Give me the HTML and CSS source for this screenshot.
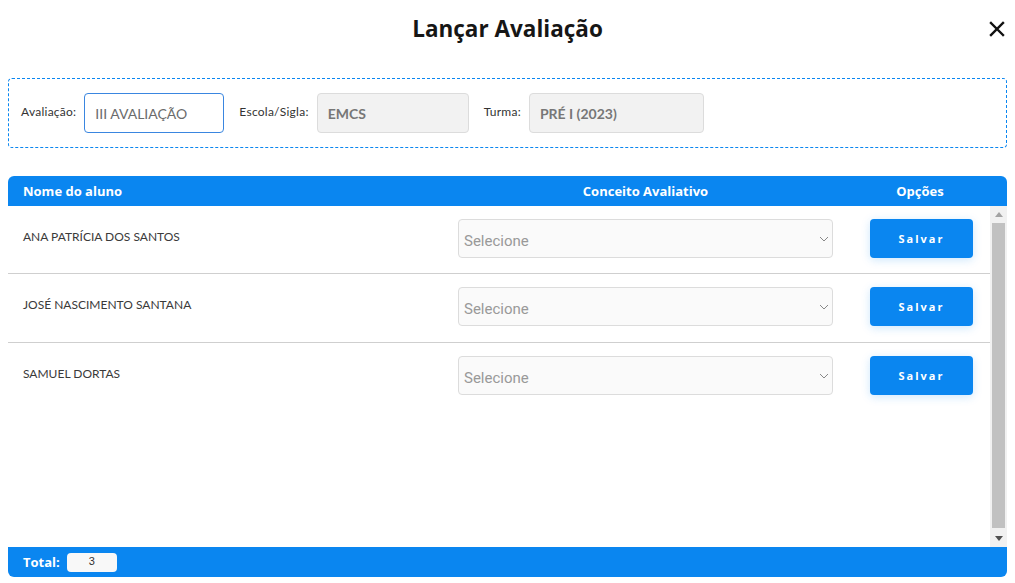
FILE: index.html
```
<!DOCTYPE html>
<html lang="pt-BR">
<head>
    <meta charset="UTF-8">
    <meta name="viewport" content="width=device-width, initial-scale=1.0">
    <title>Lançar Avaliação</title>
    <link rel="stylesheet" href="styles.css">
</head>
<body>
    <div class="modal">
        <div class="modal-head">
            <h1 class="modal-title">Lançar Avaliação</h1>
            <button class="close-btn" aria-label="Fechar">
                <svg width="16" height="16" viewBox="0 0 16 16">
                    <path d="M2 2 L14 14 M14 2 L2 14" stroke="#111" stroke-width="2.4" stroke-linecap="square" fill="none"/>
                </svg>
            </button>
        </div>

        <div class="filters">
            <label class="field-label">Avaliação:</label>
            <input class="field field-active w-aval" type="text" value="III AVALIAÇÃO">
            <label class="field-label">Escola/Sigla:</label>
            <input class="field field-disabled w-escola" type="text" value="EMCS" disabled>
            <label class="field-label">Turma:</label>
            <input class="field field-disabled w-turma" type="text" value="PRÉ I (2023)" disabled>
        </div>

        <div class="table">
            <div class="thead">
                <div class="th th-name">Nome do aluno</div>
                <div class="th">Conceito Avaliativo</div>
                <div class="th">Opções</div>
            </div>
            <div class="tbody">
                <div class="rows">
                    <div class="row">
                        <div class="td-name">ANA PATRÍCIA DOS SANTOS</div>
                        <div class="select-wrap">
                            <select class="select"><option>Selecione</option></select>
                            <svg class="chevron" width="10" height="6" viewBox="0 0 10 6"><path d="M1 1 L5 5 L9 1" stroke="#888" stroke-width="1" fill="none"/></svg>
                        </div>
                        <div class="td-opt"><button class="btn-save">Salvar</button></div>
                    </div>
                    <div class="row">
                        <div class="td-name">JOSÉ NASCIMENTO SANTANA</div>
                        <div class="select-wrap">
                            <select class="select"><option>Selecione</option></select>
                            <svg class="chevron" width="10" height="6" viewBox="0 0 10 6"><path d="M1 1 L5 5 L9 1" stroke="#888" stroke-width="1" fill="none"/></svg>
                        </div>
                        <div class="td-opt"><button class="btn-save">Salvar</button></div>
                    </div>
                    <div class="row row-last">
                        <div class="td-name">SAMUEL DORTAS</div>
                        <div class="select-wrap">
                            <select class="select"><option>Selecione</option></select>
                            <svg class="chevron" width="10" height="6" viewBox="0 0 10 6"><path d="M1 1 L5 5 L9 1" stroke="#888" stroke-width="1" fill="none"/></svg>
                        </div>
                        <div class="td-opt"><button class="btn-save">Salvar</button></div>
                    </div>
                </div>
                <!-- barra de rolagem -->
                <div class="scrollbar">
                    <div class="scroll-btn">
                        <svg width="8" height="5" viewBox="0 0 8 5"><path d="M0 5 L4 0 L8 5 Z" fill="#a3a3a3"/></svg>
                    </div>
                    <div class="scroll-thumb"></div>
                    <div class="scroll-btn">
                        <svg width="8" height="5" viewBox="0 0 8 5"><path d="M0 0 L8 0 L4 5 Z" fill="#505050"/></svg>
                    </div>
                </div>
            </div>
            <div class="tfoot">
                <span class="total-label">Total:</span>
                <span class="total-box">3</span>
            </div>
        </div>
    </div>
</body>
</html>
```

FILE: styles.css
```
body {
    margin: 0;
    background-color: #fff;
    font-family: Lato, "Open Sans", sans-serif;
    color: #333;
}

.modal {
    padding: 0 8px;
}

.modal-head {
    height: 56px;
    display: flex;
    align-items: center;
    justify-content: center;
    position: relative;
    margin-bottom: 22px;
}

.modal-title {
    margin: 0;
    font-family: "Open Sans", sans-serif;
    font-size: 22.5px;
    font-weight: 700;
    color: #161616;
}

.close-btn {
    position: absolute;
    right: 2px;
    top: 21px;
    border: none;
    background: none;
    padding: 0;
    cursor: pointer;
    line-height: 0;
}

.filters {
    border: 1px dashed #0a86f0;
    border-radius: 4px;
    padding: 14px 12px;
    display: flex;
    align-items: center;
}

.field-label {
    font-size: 12px;
    letter-spacing: 0.25px;
    color: #333;
    margin-right: 8px;
    margin-top: -4px;
}

.field {
    box-sizing: border-box;
    height: 40px;
    border-radius: 4px;
    padding: 0 10px;
    font-family: Lato, sans-serif;
    font-size: 14px;
    color: #6b6b6b;
    margin-right: 15px;
    outline: none;
}

.field-active {
    border: 1px solid #3a86e0;
    background: #fff;
}

.field-disabled {
    border: 1px solid #dcdcdc;
    background: #f2f2f2;
    font-weight: 700;
    color: #777;
}

.w-aval { width: 140px; }
.w-escola { width: 152px; }
.w-turma { width: 175px; }

.table {
    margin-top: 28px;
}

.thead {
    display: grid;
    grid-template-columns: 450px 375px 1fr;
    height: 30px;
    align-items: center;
    background-color: #0a86f0;
    border-radius: 6px 6px 0 0;
}

.th {
    color: #fff;
    font-family: "Open Sans", sans-serif;
    font-size: 13px;
    font-weight: 700;
    text-align: center;
}

.th-name {
    text-align: left;
    padding-left: 15px;
}

.tbody {
    height: 341px;
    display: flex;
}

.rows {
    flex: 1;
}

.row {
    display: grid;
    grid-template-columns: 450px 375px 1fr;
    align-items: center;
    padding: 13px 0 15px;
    border-bottom: 1px solid #cfcfcf;
}

.row:nth-child(2) {
    padding-bottom: 16px;
}

.row-last {
    border-bottom: none;
}

.td-name {
    padding-left: 15px;
    font-size: 12px;
    color: #3a3a3a;
    margin-top: -4px;
}

.select-wrap {
    position: relative;
}

.select {
    -webkit-appearance: none;
    appearance: none;
    width: 100%;
    height: 39px;
    box-sizing: border-box;
    border: 1px solid #dcdcdc;
    border-radius: 4px;
    background: #fafafa;
    padding: 4px 5px 0;
    font-family: Roboto, sans-serif;
    font-size: 15px;
    color: #999;
}

.chevron {
    position: absolute;
    right: 4px;
    top: 17px;
}

.td-opt {
    padding-left: 37px;
}

.btn-save {
    width: 103px;
    height: 39px;
    border: none;
    border-radius: 4px;
    background-color: #0a86f0;
    color: #fff;
    font-family: "Open Sans", sans-serif;
    font-size: 11px;
    font-weight: 700;
    letter-spacing: 2px;
    box-shadow: 0 2px 10px rgba(10, 134, 240, 0.2);
    cursor: pointer;
}

.scrollbar {
    width: 17px;
    background: #f1f1f1;
    display: flex;
    flex-direction: column;
}

.scroll-btn {
    height: 17px;
    display: flex;
    align-items: center;
    justify-content: center;
}

.scroll-thumb {
    flex: 1;
    margin: 0 2px 2px;
    background: #c1c1c1;
}

.tfoot {
    height: 30px;
    display: flex;
    align-items: center;
    background-color: #0a86f0;
    border-radius: 0 0 6px 6px;
    padding-left: 15px;
}

.total-label {
    color: #fff;
    font-family: "Open Sans", sans-serif;
    font-size: 13px;
    font-weight: 700;
    margin-right: 7px;
}

.total-box {
    width: 50px;
    height: 19px;
    line-height: 17px;
    background: #f8f8f8;
    border-radius: 4px;
    text-align: center;
    font-family: Arial, "Liberation Sans", sans-serif;
    font-size: 11px;
    color: #333;
}
```
